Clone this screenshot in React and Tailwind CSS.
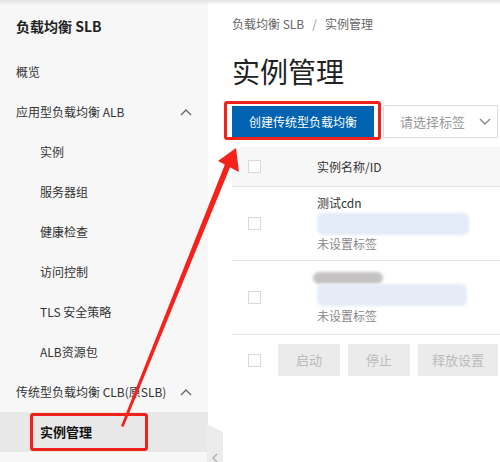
import React from 'react';

const font = { fontFamily: '"Noto Sans CJK SC", "Noto Sans", sans-serif' };

function ChevronUp() {
  return (
    <svg width="12" height="8" viewBox="0 0 12 8" className="text-[#666]">
      <path d="M1 7 L6 2 L11 7" fill="none" stroke="currentColor" strokeWidth="1.4" />
    </svg>
  );
}

function Checkbox() {
  return <div className="w-[13px] h-[13px] border border-[#d9d9d9] bg-white" />;
}

function Blur({ className }) {
  return <div className={`rounded-md blur-[1.5px] ${className}`} />;
}

const subItems = ['实例', '服务器组', '健康检查', '访问控制', 'TLS 安全策略', 'ALB资源包'];

function Sidebar() {
  return (
    <aside className="w-[208px] shrink-0 bg-[#f7f7f7] text-[12px] text-[#333] flex flex-col">
      <div className="h-[52px] flex items-center px-4 text-[14px] font-semibold text-[#222]">负载均衡 SLB</div>
      <div className="h-10 flex items-center px-4">概览</div>
      <div className="h-10 flex items-center justify-between pl-4 pr-4">
        <span>应用型负载均衡 ALB</span>
        <ChevronUp />
      </div>
      {subItems.map((s) => (
        <div key={s} className="h-10 flex items-center pl-10">{s}</div>
      ))}
      <div className="h-10 flex items-center justify-between pl-4 pr-4">
        <span>传统型负载均衡 CLB(原SLB)</span>
        <ChevronUp />
      </div>
      <div className="h-10 flex items-center pl-10 bg-[#e8e8e8] font-semibold text-[13px] text-[#111]">实例管理</div>
      <div className="flex-1" />
    </aside>
  );
}

function Row({ children }) {
  return (
    <div className="h-[74px] flex items-center border-b border-[#e5e5e5]">
      <div className="w-[85px] pl-4 flex items-center"><Checkbox /></div>
      <div className="flex flex-col">{children}</div>
    </div>
  );
}

function Main() {
  return (
    <main className="flex-1 bg-white pl-6 overflow-hidden">
      <div className="h-12 flex items-center text-[12px] text-[#666]">
        负载均衡 SLB <span className="mx-2 text-[#999]">/</span> 实例管理
      </div>
      <div className="h-[46px] flex items-center text-[28px] text-[#222] leading-none">实例管理</div>
      <div className="mt-[11px] flex items-center">
        <button className="w-[142px] h-8 bg-[#0063b1] text-white text-[12px]">创建传统型负载均衡</button>
        <div className="ml-[9px] w-[115px] h-[33px] border border-[#dcdcdc] flex items-center justify-between pl-4 pr-[6px] text-[13px] text-[#999]">
          <span>请选择标签</span>
          <svg width="12" height="8" viewBox="0 0 12 8">
            <path d="M1 1 L6 6 L11 1" fill="none" stroke="#888" strokeWidth="1.4" />
          </svg>
        </div>
      </div>
      <div className="mt-[9px] w-[300px] text-[12px]">
        <div className="h-10 bg-[#f7f7f7] flex items-center border-b border-[#e5e5e5]">
          <div className="w-[85px] pl-4 flex items-center"><Checkbox /></div>
          <span className="text-[#333]">实例名称/ID</span>
        </div>
        <Row>
          <span className="text-[#333] leading-4">测试cdn</span>
          <Blur className="mt-[2px] w-[152px] h-[22px] bg-[#e2ebf7]" />
          <span className="mt-[1px] text-[#888] leading-4">未设置标签</span>
        </Row>
        <Row>
          <Blur className="-ml-1 w-[70px] h-[12px] bg-[#c4c2c2]" />
          <Blur className="w-[150px] h-[22px] bg-[#e4ebf7]" />
          <span className="mt-[2px] text-[#888] leading-4">未设置标签</span>
        </Row>
        <div className="h-[50px] flex items-center">
          <div className="w-[46px] pl-4 flex items-center"><Checkbox /></div>
          <div className="flex gap-2 text-[13px] text-[#bbb]">
            <div className="w-[62px] h-8 bg-[#ebebeb] flex items-center justify-center">启动</div>
            <div className="w-[62px] h-8 bg-[#ebebeb] flex items-center justify-center">停止</div>
            <div className="w-[80px] h-8 bg-[#ebebeb] flex items-center justify-center">释放设置</div>
          </div>
        </div>
      </div>
    </main>
  );
}

export default function App() {
  return (
    <div className="relative w-[500px] h-[462px] overflow-hidden flex bg-white" style={font}>
      <Sidebar />
      <Main />
      <div className="absolute top-0 left-0 w-full h-[5px] bg-gradient-to-b from-[#e2e2e2] to-transparent" />
      {/* collapse tab */}
      <svg className="absolute left-[207px] top-[424px]" width="18" height="38" viewBox="0 0 18 38">
        <path d="M0 0 L16 8 L16 38 L0 38 Z" fill="#ececec" />
        <path d="M10 30 L6 34 L10 38" fill="none" stroke="#aaa" strokeWidth="1.2" />
      </svg>
      {/* red highlight boxes */}
      <div className="absolute left-[224px] top-[101px] w-[157px] h-[39px] border-[3px] border-[#f5221b] rounded-[3px]" />
      <div className="absolute left-[30px] top-[413px] w-[118px] h-[38px] border-[3px] border-[#f5221b] rounded-[3px]" />
      {/* arrow */}
      <svg className="absolute left-0 top-0 pointer-events-none" width="500" height="462">
        <polygon points="121,426 123.5,427 231,165 225.5,163" fill="#f5221b" />
        <polygon points="236,148 239,172 218,161" fill="#f5221b" />
      </svg>
    </div>
  );
}
